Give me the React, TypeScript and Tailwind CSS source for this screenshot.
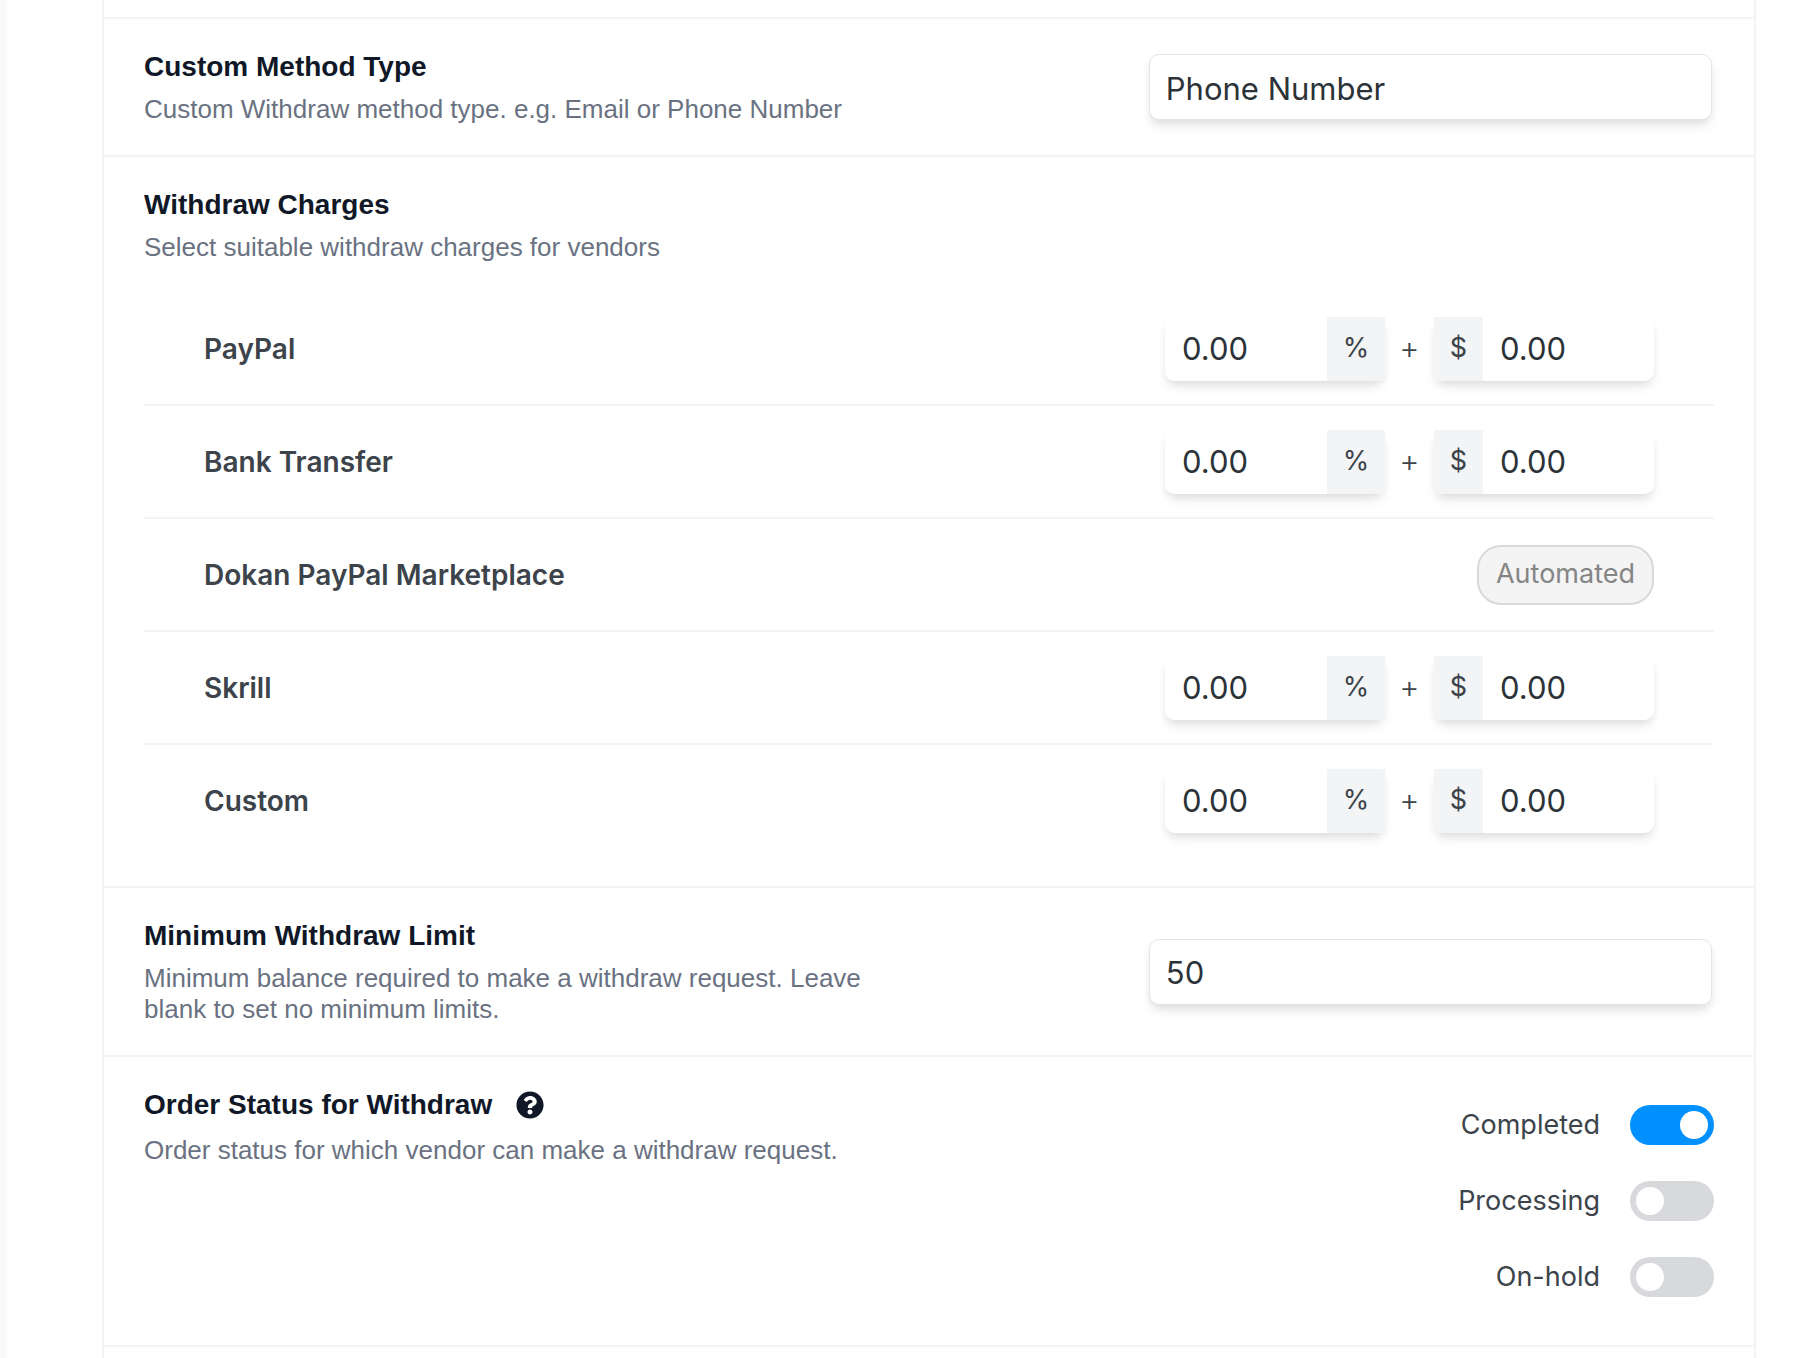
import { useState } from 'react';
import type { ReactNode } from 'react';
import { FaQuestionCircle } from 'react-icons/fa';

type ChargeMethod = {
  id: string;
  title: string;
  automated?: boolean;
};

const chargeMethods: ChargeMethod[] = [
  { id: 'paypal', title: 'PayPal' },
  { id: 'bank', title: 'Bank Transfer' },
  { id: 'dokan-paypal', title: 'Dokan PayPal Marketplace', automated: true },
  { id: 'skrill', title: 'Skrill' },
  { id: 'custom', title: 'Custom' },
];

const orderStatuses = [
  { id: 'completed', title: 'Completed', enabled: true },
  { id: 'processing', title: 'Processing', enabled: false },
  { id: 'on-hold', title: 'On-hold', enabled: false },
];

const fieldShadow = 'shadow-[0_8px_12px_-2px_rgb(0_0_0/0.08),0_4px_8px_-2px_rgb(0_0_0/0.08)]';

function FieldHeading({ title, description }: { title: ReactNode; description: string }) {
  return (
    <div className="w-1/2 font-['Liberation_Sans',Arial,sans-serif]">
      <h3 className="mb-[11px] text-[28px] leading-8 font-bold text-gray-900">{title}</h3>
      <p className="text-[26px] leading-[31px] text-gray-500">{description}</p>
    </div>
  );
}

function TextField({ id, title, description, defaultValue }: {
  id: string;
  title: string;
  description: string;
  defaultValue: string;
}) {
  return (
    <section className="flex items-center justify-between border-b-2 border-gray-100 px-10 pt-8 pb-[30px]">
      <FieldHeading title={<label htmlFor={id}>{title}</label>} description={description} />
      <div className="w-[36%] pr-0.5 pb-0.5">
        <input
          id={id}
          type="text"
          defaultValue={defaultValue}
          className={`block h-[66px] w-full rounded-[10px] border border-[#e5e5e5] bg-white px-4 pt-0.5 text-[31px] text-[#2c3338] ${fieldShadow}`}
        />
      </div>
    </section>
  );
}

function ChargeRow({ method }: { method: ChargeMethod }) {
  const [percentage, setPercentage] = useState('0.00');
  const [fixed, setFixed] = useState('0.00');

  return (
    <div className="flex min-h-[113px] items-center justify-between px-[60px] last:min-h-[111px]">
      <h4 className="text-[28px] leading-8 font-semibold">{method.title}</h4>
      {method.automated ? (
        <span className="flex h-[60px] items-center rounded-3xl border-2 border-[#d9d9d9] bg-[#f4f4f4] px-[17px] text-[27px] text-[#858585]">
          Automated
        </span>
      ) : (
        <div className="flex items-center text-[27px]">
          <div className={`flex h-16 w-[220px] rounded-[10px] ${fieldShadow}`}>
            <input
              type="text"
              aria-label={`${method.title} percentage charge`}
              value={percentage}
              onChange={(e) => setPercentage(e.target.value)}
              className="min-w-0 flex-1 rounded-l-[10px] bg-white pt-0.5 pl-[17px] text-[31px] text-[#2c3338]"
            />
            <span className="flex w-[58px] items-center justify-center bg-gray-100">%</span>
          </div>
          <span className="w-[49px] text-center text-[31px] font-light">+</span>
          <div className={`flex h-16 w-[220px] rounded-[10px] ${fieldShadow}`}>
            <span className="flex w-[49px] items-center justify-center bg-gray-100">$</span>
            <input
              type="text"
              aria-label={`${method.title} fixed charge`}
              value={fixed}
              onChange={(e) => setFixed(e.target.value)}
              className="min-w-0 flex-1 rounded-r-[10px] bg-white pt-0.5 pl-[17px] text-[31px] text-[#2c3338]"
            />
          </div>
        </div>
      )}
    </div>
  );
}

function Toggle({ id, title, enabled }: { id: string; title: string; enabled: boolean }) {
  const [checked, setChecked] = useState(enabled);

  return (
    <div className="flex h-10 items-center justify-end gap-[30px]">
      <label htmlFor={id} className="text-[27px]">
        {title}
      </label>
      <input
        id={id}
        type="checkbox"
        role="switch"
        checked={checked}
        onChange={(e) => setChecked(e.target.checked)}
        className="flex h-10 w-[84px] appearance-none items-center rounded-full bg-[#d8d9dd] px-1.5 before:block before:size-7 before:rounded-full before:bg-white checked:justify-end checked:bg-[#0090ff]"
      />
    </div>
  );
}

export default function App() {
  return (
    <div className="flex min-h-screen bg-white font-[Inter,sans-serif] text-[#3c434a]">
      <aside className="w-[7px] shrink-0 bg-[#fafafa]" />
      <main className="mr-12 ml-[95px] flex-1 border-x-2 border-gray-100">
        <div className="h-[19px] border-b-2 border-gray-100" />

        <TextField
          id="method-type"
          title="Custom Method Type"
          description="Custom Withdraw method type. e.g. Email or Phone Number"
          defaultValue="Phone Number"
        />

        <section className="border-b-2 border-gray-100 px-10 pt-8 pb-[30px]">
          <FieldHeading title="Withdraw Charges" description="Select suitable withdraw charges for vendors" />
          <div className="mt-[30px] divide-y-2 divide-gray-100">
            {chargeMethods.map((method) => (
              <ChargeRow key={method.id} method={method} />
            ))}
          </div>
        </section>

        <TextField
          id="withdraw-limit"
          title="Minimum Withdraw Limit"
          description="Minimum balance required to make a withdraw request. Leave blank to set no minimum limits."
          defaultValue="50"
        />

        <section className="flex justify-between border-b-2 border-gray-100 px-10 pt-8 pb-[30px]">
          <div className="w-1/2 font-['Liberation_Sans',Arial,sans-serif]">
            <div className="mb-3.5 flex items-center gap-6 text-gray-900">
              <h3 className="text-[28px] leading-8 font-bold">Order Status for Withdraw</h3>
              <button type="button" aria-label="More about order status">
                <FaQuestionCircle className="size-7" />
              </button>
            </div>
            <p className="text-[26px] leading-[31px] text-gray-500">
              Order status for which vendor can make a withdraw request.
            </p>
          </div>
          <div className="flex flex-col gap-9 pt-4 pb-[18px]">
            {orderStatuses.map((status) => (
              <Toggle key={status.id} {...status} />
            ))}
          </div>
        </section>
      </main>
    </div>
  );
}
